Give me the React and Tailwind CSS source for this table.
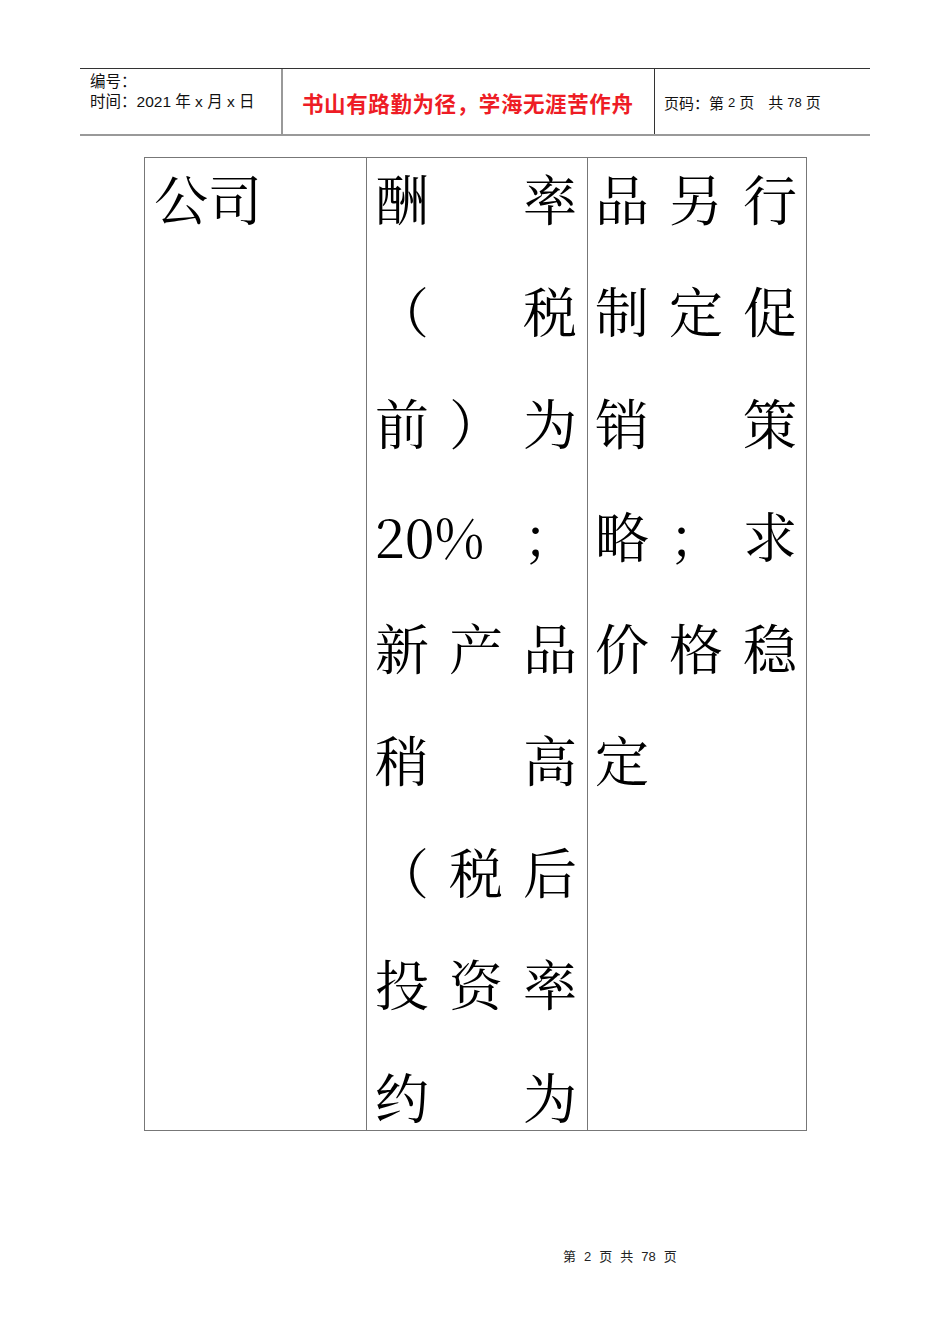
import React from "react";

// each line of a column, split into boxes spread across the cell
const col2 = [
  ["酬", "率"],
  ["（", "税"],
  ["前", "）", "为"],
  ["20%", "；"],
  ["新", "产", "品"],
  ["稍", "高"],
  ["（", "税", "后"],
  ["投", "资", "率"],
  ["约", "为"],
];

const col3 = [
  ["品", "另", "行"],
  ["制", "定", "促"],
  ["销", "策"],
  ["略", "；", "求"],
  ["价", "格", "稳"],
  ["定"],
];

const Line = ({ parts, last }) => (
  <div
    className={`${last ? "" : "h-[112.2px]"} pt-[13px] flex ${
      parts.length === 1 ? "justify-start" : "justify-between"
    } text-[54px] leading-none text-black`}
  >
    {parts.map((p, i) => (
      <span key={i} className={p.length > 1 ? "" : "w-[54px] text-center"}>
        {p}
      </span>
    ))}
  </div>
);

export default function App() {
  return (
    <div className="w-[950px] h-[1344px] bg-white pt-[68px] font-['Liberation_Sans','Noto_Sans_CJK_SC',sans-serif]">
      {/* page header */}
      <div className="ml-[80px] w-[790px] h-[68px] flex border-t border-[#333] border-b-2 border-b-[#999]">
        <div className="w-[201px] pl-[10px] pt-[1px] text-[15.5px] leading-[20px] text-[#111]">
          <div className="font-['Noto_Sans_CJK_SC',sans-serif]">编号：</div>
          <div>
            <span className="font-['Noto_Sans_CJK_SC',sans-serif]">时间：</span>2021 年 x 月 x 日
          </div>
        </div>
        <div className="w-[373px] border-l-2 border-[#999] flex items-center pl-[19px] pt-[3px]">
          <span className="text-[21.5px] font-bold text-[#ee1c25] tracking-[0.6px] font-['Noto_Sans_CJK_SC',sans-serif]">
            书山有路勤为径，学海无涯苦作舟
          </span>
        </div>
        <div className="flex-1 border-l border-[#333] flex items-center pl-[9px] pt-[3px] text-[15px] text-[#111]">
          <span className="font-['Noto_Sans_CJK_SC',sans-serif]">页码：第</span>
          <span className="text-[13px] mx-[4px]">2</span>
          <span>页</span>
          <span className="ml-[14px]">共</span>
          <span className="text-[13px] mx-[4px]">78</span>
          <span>页</span>
        </div>
      </div>

      {/* content table */}
      <div className="ml-[144px] mt-[21px] w-[663px] h-[974px] flex border border-[#777] font-['Noto_Serif_CJK_SC','Noto_Sans_CJK_SC',serif]">
        <div className="w-[221px] pl-[9px]">
          <div className="pt-[13px] text-[54px] leading-none text-black">公司</div>
        </div>
        <div className="w-[221px] border-l border-[#777] pl-[8px] pr-[10px]">
          {col2.map((l, i) => (
            <Line key={i} parts={l} last={i === col2.length - 1} />
          ))}
        </div>
        <div className="flex-1 border-l border-[#777] pl-[7px] pr-[9px]">
          {col3.map((l, i) => (
            <Line key={i} parts={l} />
          ))}
        </div>
      </div>

      {/* page footer */}
      <div className="mt-[117px] ml-[563px] flex gap-[8px] text-[13px] leading-[18px] text-[#222]">
        <span>第</span>
        <span>2</span>
        <span>页</span>
        <span>共</span>
        <span>78</span>
        <span>页</span>
      </div>
    </div>
  );
}
